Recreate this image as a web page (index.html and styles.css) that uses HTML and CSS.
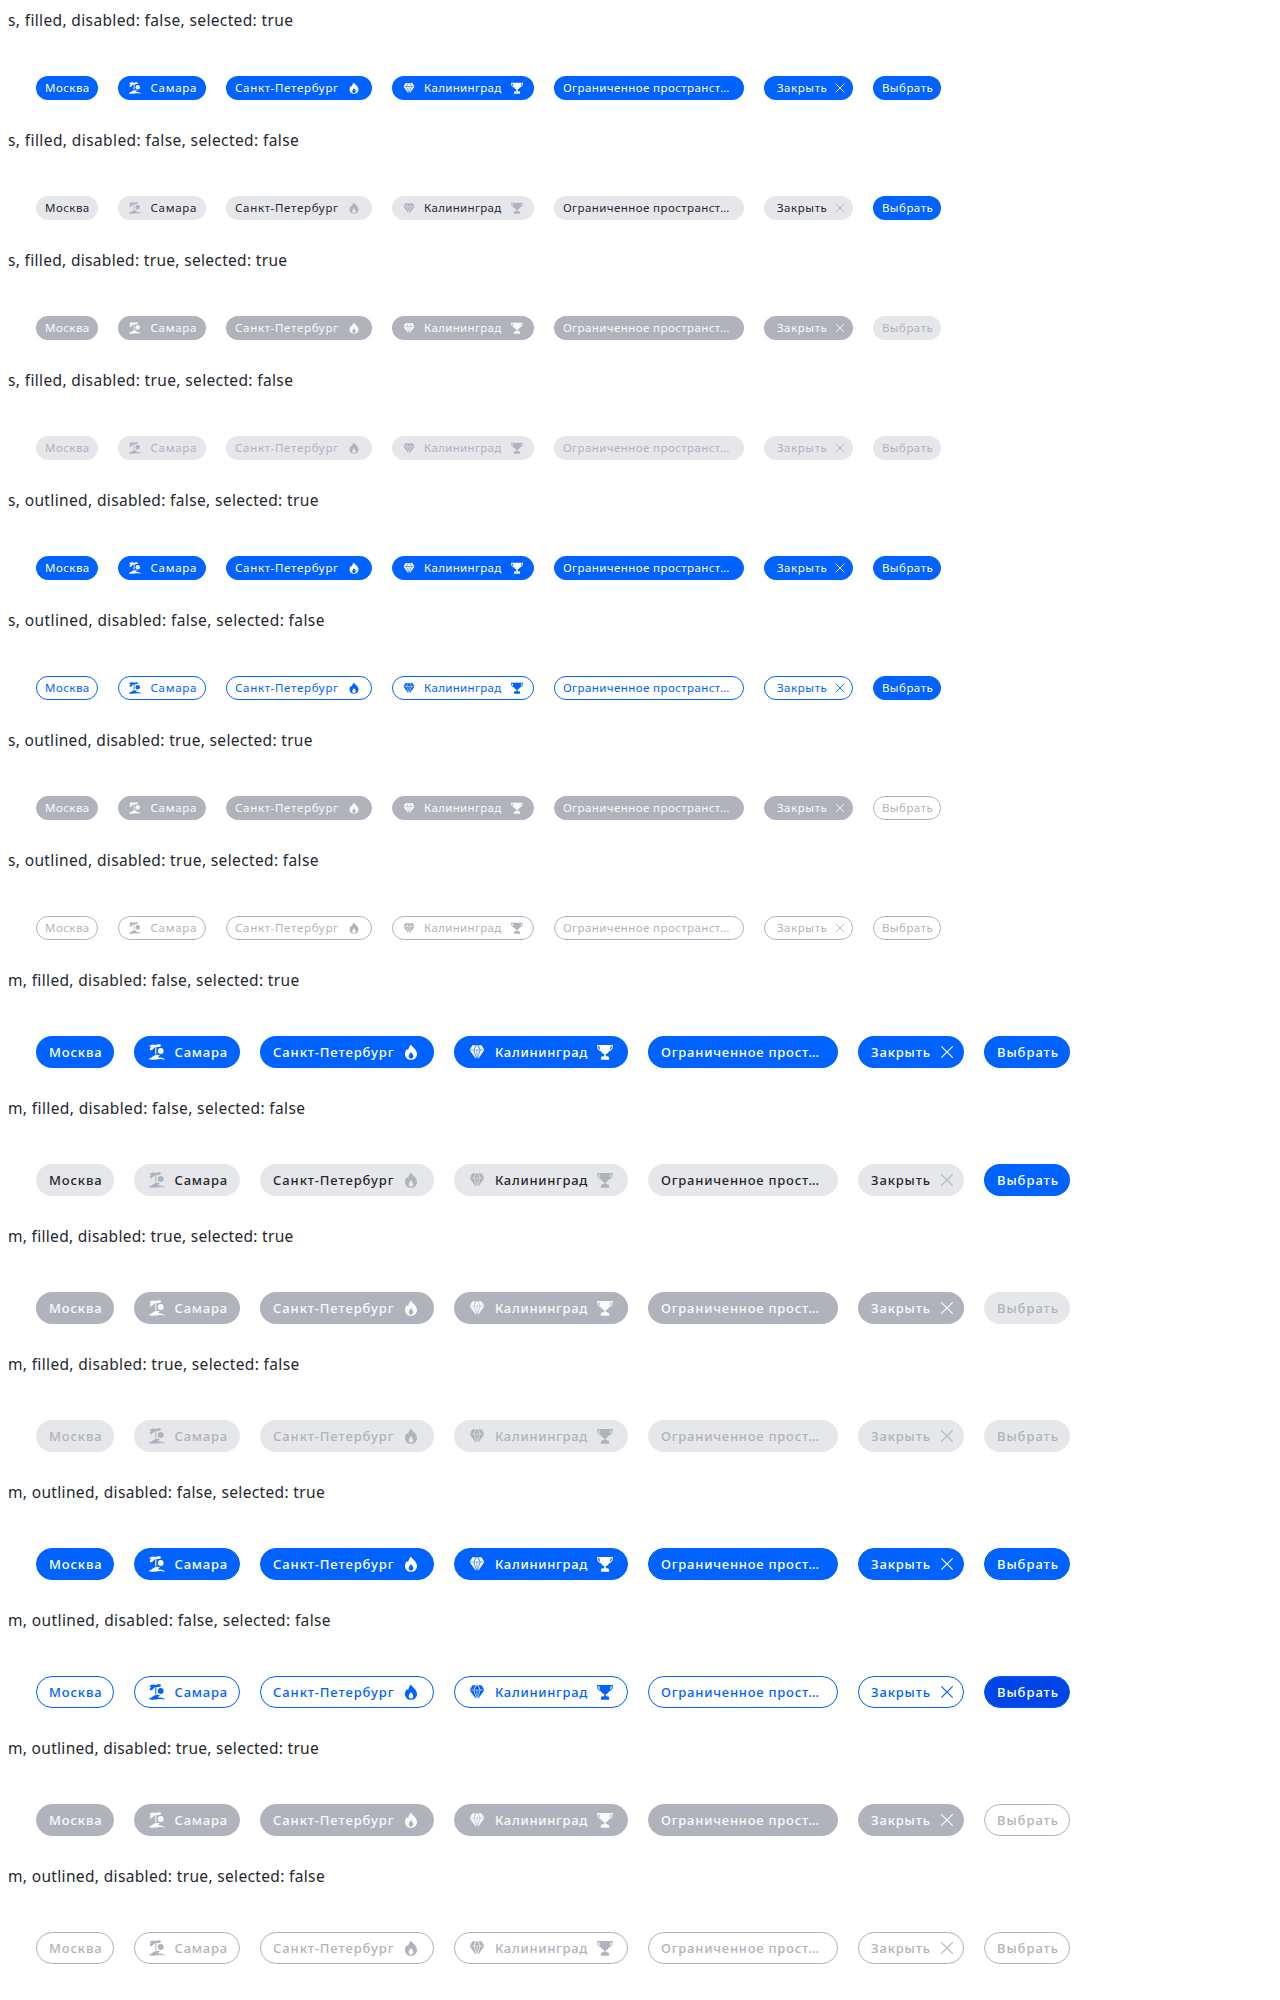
FILE: index.html
```
<!DOCTYPE html>
<html lang="ru">
<head>
<meta charset="utf-8">
<title>Chips</title>
<link rel="stylesheet" href="styles.css">
</head>
<body>
<svg class="sprite" aria-hidden="true">
  <symbol id="palm" viewBox="0 0 24 24">
    <path d="M10 6.900L7.600 9.400 5.700 10.500 4.600 9.300C5 8.300 5.600 7.400 6.400 6.800L4.300 6.500C5 4.400 8.600 3.800 10.800 5.100 12.700 3.700 15.400 4 16.400 5.400 15 6.900 13.200 7.200 11.300 7L11.300 14.200H10.200L10.300 7.600z"/>
    <circle cx="15.7" cy="11" r="2.9"/>
    <path d="M4.300 19.600v-1.300c1.900-.3 3-1.400 4.700-2.500 2-1.200 4.800-1.200 6-.2-1.200.6-1.800 1.100-2 1.900 3-.2 5.300.5 7 1.500v.6c-2-.5-3.600-.7-5.200-.5-3 .4-6.600.8-10.500.5z"/>
  </symbol>
  <symbol id="fire" viewBox="0 0 24 24">
    <path fill-rule="evenodd" d="M12 4.600c.5 2.500 6 4.600 6 9.300 0 3.400-2.600 5.900-6 5.900s-6-2.500-6-5.900c0-2 .8-3.700 1.900-5 .4.700.8 1 1.300 1.200C9.400 8.200 10.400 6.200 12 4.600zM12 12c-.6 1.300-2.300 2.300-2.300 4.200 0 1.400 1 2.400 2.300 2.400s2.300-1 2.300-2.400C14.300 14.300 12.600 13.300 12 12z"/>
  </symbol>
  <symbol id="diamond" viewBox="0 0 24 24">
    <path d="M7.500 5.200h3.200L8.500 9.800H4.700zM11.500 5.200h1L14.800 9.800H9.200zM13.300 5.200h3.200l2.800 4.600h-3.800zM4.700 10.200h3.800l2.700 8h-.7zM9.200 10.200h2.500v8zM12.300 10.200h2.500l-2.500 8zM15.500 10.200h3.800l-5.800 8h-.7z"/>
  </symbol>
  <symbol id="trophy" viewBox="0 0 24 24">
    <path fill-rule="evenodd" d="M4.200 5h15.600v1.800c0 2.500-1.500 4.200-3.900 4.600-.7 1.300-1.700 2.200-3.100 2.600v2.300h1.400c1.200 0 1.900.8 1.900 1.900v1.500H7.900v-1.500c0-1.100.7-1.900 1.900-1.900h1.400V14c-1.400-.4-2.400-1.300-3.100-2.600-2.400-.4-3.900-2.100-3.900-4.600zM5.300 6.300v.6c0 1.400.6 2.400 1.700 3-.3-1.100-.5-2.300-.5-3.600zM18.700 6.300h-1.200c0 1.300-.2 2.500-.5 3.600 1.100-.6 1.700-1.600 1.700-3z"/>
  </symbol>
  <symbol id="cross" viewBox="0 0 24 24">
    <path class="cross-line" d="M6.300 6.300l11.400 11.400M17.700 6.300L6.300 17.700"/>
  </symbol>
</svg>
<main id="root"></main>
<script src="chips.js"></script>
</body>
</html>
```
FILE: styles.css
```
body {
  margin: 0;
  padding: 8px 8px 0;
  background: #fff;
  color: #26282f;
  font-family: "Noto Sans", "Open Sans", sans-serif;
}

.sprite { display: none; }

.title {
  height: 24px;
  font-size: 15.5px;
  line-height: 24px;
  white-space: nowrap;
}

.row {
  display: flex;
  gap: 20px;
  padding: 44px 28px 28px;
}

.chip {
  display: flex;
  flex: none;
  align-items: center;
  justify-content: space-between;
  box-sizing: border-box;
  border: 1px solid transparent;
  color: #fff;
  white-space: nowrap;
}
.label {
  display: flex;
  align-items: center;
}
.icon {
  display: block;
  flex: none;
  fill: currentColor;
}
.cross-line {
  fill: none;
  stroke: currentColor;
  stroke-width: 1.15;
}

.s .chip {
  height: 24px;
  padding: 0 7px 0 8px;
  border-radius: 12px;
  font-size: 11.5px;
  line-height: 16px;
}
.s .icon { width: 18px; height: 18px; }
.s .label .icon { margin: 0 6.5px 0 -1px; }
.s .icon-fire { margin-right: 1px; }
.s .icon-cross { margin-right: -4px; }
.s .cross-line, .s .icon-cross { stroke-width: 1.4; }
.s .chip-close { padding-left: 12px; }

.m .chip {
  height: 32px;
  padding: 0 11px 0 12px;
  border-radius: 16px;
  font-size: 13px;
  font-weight: 500;
  line-height: 20px;
}
.m .icon { width: 24px; height: 24px; margin-right: -1px; }
.m .label .icon { margin: 0 5.5px 0 -2px; }
.m .icon-cross { margin-right: -7px; }

.filled .chip { border: 0; }
.s.filled .chip { padding: 0 8px 0 9px; }
.s.filled .chip-close { padding-left: 13px; }
.m.filled .chip { padding: 0 12px 0 13px; }

.chip.primary { background: #0062ff; }
.chip.pressed { background: #0046e6; }
.chip.muted { background: #b0b3bb; color: #fafafb; }
.chip.plain { background: #e6e7eb; color: #26282c; }
.chip.plain .icon { color: #b0b3bb; }
.chip.plain-off { background: #e6e7eb; color: #b0b3bb; }
.chip.plain.primary { color: #fff; }
.outlined .primary, .outlined .pressed { border-color: #0062ff; }
.outlined .muted { border-color: #b0b3bb; }
.chip.line { border-color: #0062ff; color: #0062ff; }
.chip.line-off { border-color: #b0b3bb; color: #b0b3bb; }
```
FILE: chips.js
```
// text, width, letter spacing, leading icon, trailing icon
const chips = {
  s: [
    ['Москва', 62, 0.46],
    ['Самара', 88, 0.7, 'palm'],
    ['Санкт-Петербург', 145.5, 0.7, '', 'fire'],
    ['Калининград', 142.4, 0.33, 'diamond', 'trophy'],
    ['Ограниченное пространст…', 190, 0.42],
    ['Закрыть', 89, 0.58, '', 'cross'],
    ['Выбрать', 68, 0.48]
  ],
  m: [
    ['Москва', 78, 0.86],
    ['Самара', 106, 0.8, 'palm'],
    ['Санкт-Петербург', 174.4, 0.93, '', 'fire'],
    ['Калининград', 173.6, 0.7, 'diamond', 'trophy'],
    ['Ограниченное прост…', 190, 0.77],
    ['Закрыть', 106, 0.86, '', 'cross'],
    ['Выбрать', 86, 0.95]
  ]
};

const icon = name => name
  ? `<svg class="icon icon-${name}"><use href="#${name}"/></svg>` : '';

function tone(view, disabled, selected, last, size) {
  const filled = view === 'filled';
  if (last) {
    if (disabled) return filled ? 'plain-off' : 'line-off';
    return size === 'm' && !filled && !selected ? 'pressed' : 'primary';
  }
  if (selected) return disabled ? 'muted' : 'primary';
  return (filled ? 'plain' : 'line') + (disabled ? '-off' : '');
}

let html = '';
for (const size of ['s', 'm'])
  for (const view of ['filled', 'outlined'])
    for (const disabled of [false, true])
      for (const selected of [true, false]) {
        const row = chips[size].map(([text, width, spacing, left, right], i) => {
          const state = tone(view, disabled, selected, i === 6, size);
          const close = right === 'cross' ? ' chip-close' : '';
          return `<div class="chip ${state}${close}" style="width:${width}px">` +
            `<span class="label">${icon(left)}<span style="letter-spacing:${spacing}px">${text}</span></span>` +
            `${icon(right)}</div>`;
        }).join('');
        const tracking = (size === 's' ? 0.32 : 0.3) + 0.04 * (!disabled + !selected);
        html += `<section class="${size} ${view}">` +
          `<div class="title" style="letter-spacing:${tracking}px">${size}, ${view}, disabled: ${disabled}, selected: ${selected}</div>` +
          `<div class="row">${row}</div></section>`;
      }
document.getElementById('root').innerHTML = html;
```
